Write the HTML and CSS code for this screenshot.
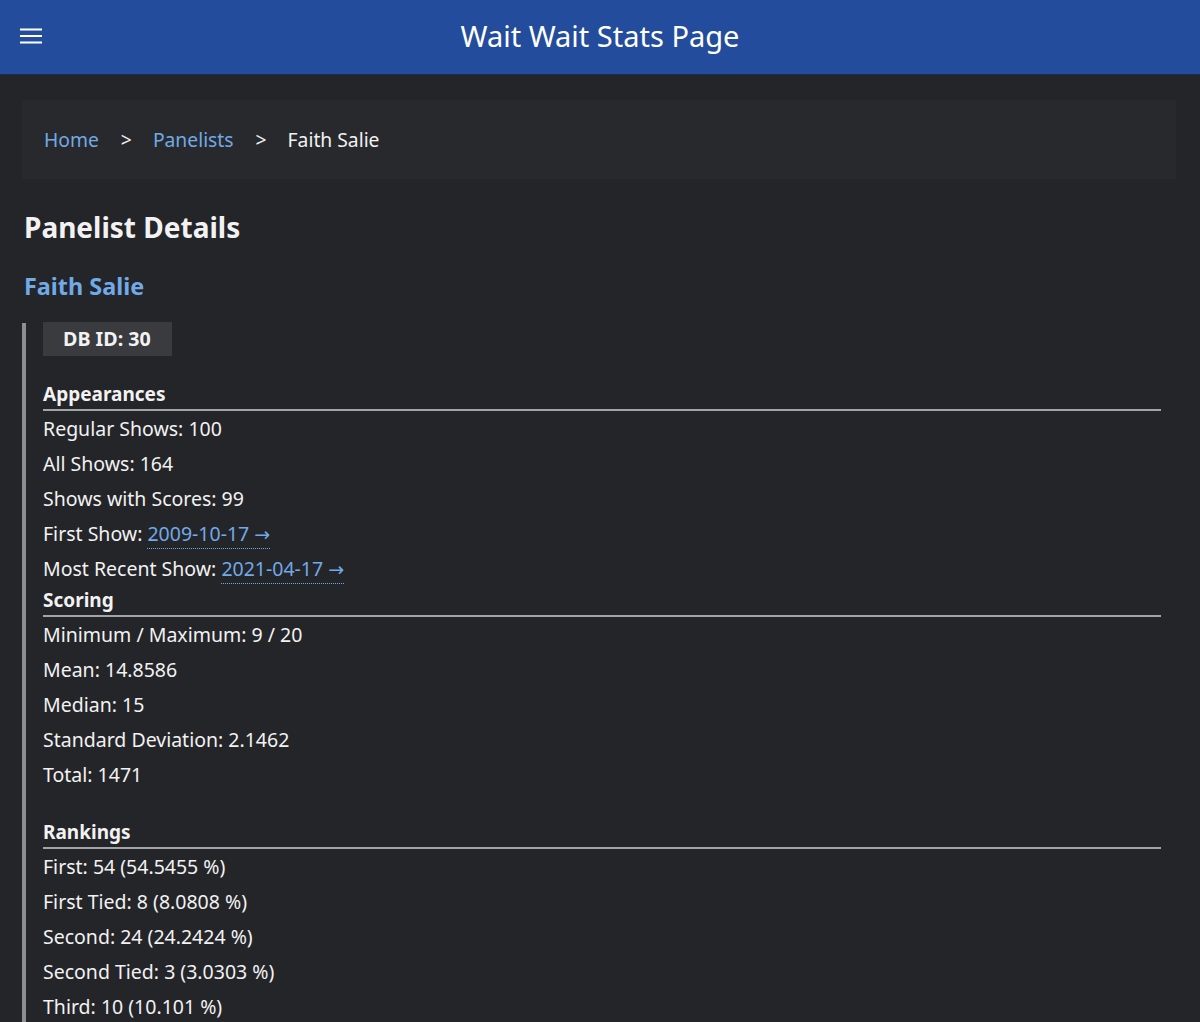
FILE: index.html
```html
<!DOCTYPE html>
<html lang="en">
<head>
<meta charset="utf-8">
<title>Wait Wait Stats Page</title>
<link rel="stylesheet" href="styles.css">
</head>
<body>
<header class="topbar">
  <button class="menu-btn" aria-label="Menu">
    <svg width="24" height="24" viewBox="0 0 24 24"><path d="M1 5.5h22M1 12h22M1 18.5h22" stroke="#fff" stroke-width="2.2" fill="none"/></svg>
  </button>
  <h1 class="site-title">Wait Wait Stats Page</h1>
</header>
<main class="main">
  <nav class="breadcrumb">
    <a href="#" class="crumb-link">Home</a>
    <span class="sep">&gt;</span>
    <a href="#" class="crumb-link">Panelists</a>
    <span class="sep">&gt;</span>
    <span class="crumb-current">Faith Salie</span>
  </nav>
  <h2 class="page-title">Panelist Details</h2>
  <h3 class="panelist-name"><a href="#">Faith Salie</a></h3>
  <div class="details">
    <div class="db-id">DB ID: 30</div>
    <section class="group first-group">
      <h4 class="group-title">Appearances</h4>
      <ul class="stats">
        <li>Regular Shows: 100</li>
        <li>All Shows: 164</li>
        <li>Shows with Scores: 99</li>
        <li>First Show: <a href="#" class="show-link">2009-10-17 <span class="arrow">→</span></a></li>
        <li>Most Recent Show: <a href="#" class="show-link">2021-04-17 <span class="arrow">→</span></a></li>
      </ul>
    </section>
    <section class="group">
      <h4 class="group-title">Scoring</h4>
      <ul class="stats">
        <li>Minimum / Maximum: 9 / 20</li>
        <li>Mean: 14.8586</li>
        <li>Median: 15</li>
        <li>Standard Deviation: 2.1462</li>
        <li>Total: 1471</li>
      </ul>
    </section>
    <section class="group spaced">
      <h4 class="group-title">Rankings</h4>
      <ul class="stats">
        <li>First: 54 (54.5455 %)</li>
        <li>First Tied: 8 (8.0808 %)</li>
        <li>Second: 24 (24.2424 %)</li>
        <li>Second Tied: 3 (3.0303 %)</li>
        <li>Third: 10 (10.101 %)</li>
      </ul>
    </section>
  </div>
</main>
</body>
</html>
```
FILE: styles.css
```css
* { box-sizing: border-box; }
html, body {
  margin: 0;
  padding: 0;
  background: #242529;
  color: #f2f2f2;
  font-family: "Noto Sans", "Open Sans", sans-serif;
}
a { color: #71aae6; text-decoration: none; }

.topbar {
  height: 75px;
  background: #234c9c;
  display: flex;
  align-items: center;
  position: relative;
  border-bottom: 1px solid #1c2c55;
}
.menu-btn {
  position: absolute;
  left: 18px;
  top: 23px;
  background: none;
  border: 0;
  padding: 0;
  width: 26px;
  height: 26px;
  display: flex;
  align-items: center;
  justify-content: center;
}
.site-title {
  margin: -3px 0 0 0;
  width: 100%;
  text-align: center;
  font-size: 29px;
  font-weight: 400;
  color: #fff;
  line-height: 1;
}

.main {
  padding: 25px 24px 0 22px;
}
.breadcrumb {
  background: #28292d;
  height: 79px;
  padding: 0 22px;
  display: flex;
  align-items: center;
  font-size: 19.3px;
}
.sep {
  margin: 0 21px 0 22px;
  color: #eee;
}
.crumb-current { color: #f2f2f2; }

.page-title {
  margin: 30px 0 0 2px;
  font-size: 28px;
  font-weight: 700;
  line-height: 36px;
}
.panelist-name {
  margin: 25px 0 0 2px;
  font-size: 23.4px;
  font-weight: 700;
  line-height: 32px;
}
.details {
  margin-top: 21px;
  border-left: 4px solid #8d8e91;
  padding: 0 15px 0 17px;
}
.db-id {
  display: inline-block;
  background: #3a3b3f;
  font-size: 19.7px;
  font-weight: 700;
  line-height: 34px;
  padding: 0 21px 0 20px;
  margin-top: -1px;
}
.group-title {
  margin: 0;
  font-size: 19px;
  font-weight: 700;
  line-height: 29px;
  border-bottom: 2px solid #a3a4a6;
}
.first-group { margin-top: 24px; }
.spaced { margin-top: 26px; }
.stats {
  list-style: none;
  margin: 0;
  padding: 0;
  font-size: 19.5px;
}
.stats li {
  line-height: 35px;
  height: 35px;
}
.show-link {
  border-bottom: 1px dotted #71aae6;
  padding-bottom: 1px;
}
.arrow {
  font-family: "DejaVu Sans", sans-serif;
  font-size: 19px;
  line-height: 0;
}
```
